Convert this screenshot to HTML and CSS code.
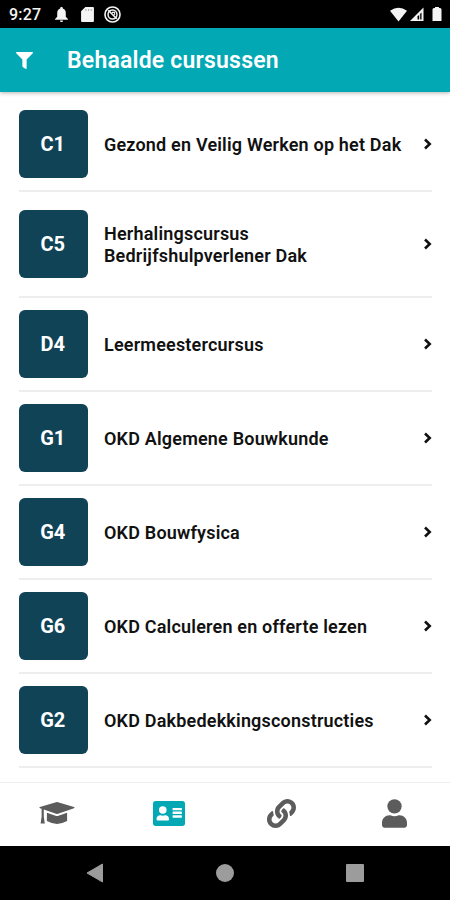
FILE: index.html
```html
<!DOCTYPE html>
<html lang="nl">
<head>
<meta charset="utf-8">
<title>Behaalde cursussen</title>
<link rel="stylesheet" href="styles.css">
</head>
<body>
<svg class="defs" width="0" height="0"><symbol id="chevron" viewBox="0 0 10 12"><path d="M2 1.5 6.7 6 2 10.5" fill="none" stroke="currentColor" stroke-width="2.6"/></symbol></svg>
<div class="app">
  <div class="status">
    <span class="time">9:27</span>
    <svg class="bell" viewBox="0 0 12 14"><path d="M6 0c.8 0 1.2.5 1.2 1.3C9.3 1.9 10 3.6 10 5.5v3.7l2 2v.8H0v-.8l2-2V5.5c0-1.9.8-3.6 2.8-4.2C4.800.5 5.200 0 6 0zM4.600 12.500h2.800C7.400 13.500 6.800 14 6 14s-1.400-.5-1.400-1.500z" fill="currentColor"/></svg>
    <svg class="sd" viewBox="0 0 12 14"><path d="M4 0h7q1 0 1 1v12q0 1-1 1H1q-1 0-1-1V4z" fill="currentColor"/><path d="M4.500 2v1.500M7 2v1.500M9.500 2v1.500" stroke="#999" stroke-width="1"/></svg>
    <svg class="sync" viewBox="0 0 16 16" fill="none" stroke="currentColor"><circle cx="8" cy="8" r="7.100" stroke-width="1.500"/><circle cx="8" cy="8" r="4.200" stroke-width="1.400"/><path d="M4 4l8 8" stroke-width="1.600"/><path d="M7.500 6h2.500v2.500" stroke-width="1"/></svg>
    <svg class="signals" viewBox="0 0 52 16"><path d="M0 3.800Q8.500-2.500 17 3.800L8.500 14.500z" fill="currentColor"/><path d="M33.500.500V14H20z" fill="currentColor"/><path d="M31.500 5.500v7h-4V9.500z" fill="#000"/><path d="M29.700 7v6" stroke="currentColor"/><path d="M44 1h1V0h4v1h1q1.500 0 1.500 1.500V14h-9V2.500Q42.500 1 44 1z" fill="currentColor"/></svg>
  </div>
  <header class="header">
    <svg class="filter" viewBox="0 0 512 512"><path fill="currentColor" d="M487.976 0H24.028C2.710 0-8.047 25.866 7.058 40.971L192 225.941V432c0 7.831 3.821 15.170 10.237 19.662l80 55.980C298.020 518.690 320 507.493 320 487.980V225.941l184.947-184.970C520.021 25.896 509.338 0 487.976 0z"/></svg>
    <h1>Behaalde cursussen</h1>
  </header>
  <main class="list">
    <div class="row"><div class="code">C1</div><div class="name">Gezond en Veilig Werken op het Dak</div><svg class="chev"><use href="#chevron"/></svg></div>
    <div class="row tall"><div class="code">C5</div><div class="name">Herhalingscursus<br>Bedrijfshulpverlener Dak</div><svg class="chev"><use href="#chevron"/></svg></div>
    <div class="row"><div class="code">D4</div><div class="name">Leermeestercursus</div><svg class="chev"><use href="#chevron"/></svg></div>
    <div class="row"><div class="code">G1</div><div class="name">OKD Algemene Bouwkunde</div><svg class="chev"><use href="#chevron"/></svg></div>
    <div class="row"><div class="code">G4</div><div class="name">OKD Bouwfysica</div><svg class="chev"><use href="#chevron"/></svg></div>
    <div class="row"><div class="code">G6</div><div class="name">OKD Calculeren en offerte lezen</div><svg class="chev"><use href="#chevron"/></svg></div>
    <div class="row"><div class="code">G2</div><div class="name">OKD Dakbedekkingsconstructies</div><svg class="chev"><use href="#chevron"/></svg></div>
  </main>
  <nav class="tabs">
    <div class="tab"><svg width="36" height="29" viewBox="0 0 36 29"><path fill="currentColor" d="M17 3.200q1-.3 2 0L35 8q1.200.6 0 1.200L19 14.800q-1 .3-2 0L4.800 10.600v7.200l1 6.800H1.600l1-6.800v-8L.9 9.200Q-.2 8.600.9 8zM7.900 13.800l8.600 3q1.500.5 3 0l8.600-3v8.300q-10 5.600-20.200 0z"/></svg></div>
    <div class="tab active"><svg width="32" height="29" viewBox="0 0 576 512"><rect y="32" width="576" height="448" rx="48" fill="currentColor"/><g fill="#fff"><circle cx="176" cy="192" r="68"/><path d="M288 364.800c0 10.600-10 19.200-22.400 19.200H86.400C74 384 64 375.400 64 364.800v-19.200c0-31.800 30.100-57.600 67.200-57.600h5c12.300 5.100 25.700 8 39.800 8s27.600-2.900 39.800-8h5c37.100 0 67.200 25.800 67.200 57.600z"/><rect x="352" y="155" width="168" height="44" rx="8"/><rect x="352" y="221" width="168" height="44" rx="8"/><rect x="352" y="287" width="168" height="44" rx="8"/></g></svg></div>
    <div class="tab"><svg width="29" height="29" viewBox="0 0 512 512"><path fill="currentColor" d="M326.612 185.391c59.747 59.809 58.927 155.698.36 214.590-.11.12-.24.25-.36.37l-67.200 67.200c-59.270 59.270-155.699 59.262-214.960 0-59.270-59.260-59.270-155.700 0-214.960l37.106-37.106c9.840-9.840 26.786-3.300 27.294 10.606.648 17.722 3.826 35.527 9.690 52.721 1.986 5.822.567 12.262-3.783 16.612l-13.087 13.087c-28.026 28.026-28.905 73.660-1.155 101.960 28.024 28.579 74.086 28.749 102.325.51l67.200-67.190c28.191-28.191 28.073-73.757 0-101.830-3.701-3.694-7.429-6.564-10.341-8.569a16.037 16.037 0 0 1-6.947-12.606c-.396-10.567 3.348-21.456 11.698-29.806l21.054-21.055c5.521-5.521 14.182-6.199 20.584-1.731a152.482 152.482 0 0 1 20.522 17.197zM467.547 44.449c-59.261-59.262-155.690-59.270-214.960 0l-67.200 67.200c-.12.12-.25.25-.36.37-58.566 58.892-59.387 154.781.36 214.590a152.454 152.454 0 0 0 20.521 17.196c6.402 4.468 15.064 3.789 20.584-1.731l21.054-21.055c8.350-8.350 12.094-19.239 11.698-29.806a16.037 16.037 0 0 0-6.947-12.606c-2.912-2.005-6.640-4.875-10.341-8.569-28.073-28.073-28.191-73.639 0-101.830l67.200-67.190c28.239-28.239 74.300-28.069 102.325.51 27.750 28.300 26.872 73.934-1.155 101.960l-13.087 13.087c-4.350 4.350-5.769 10.790-3.783 16.612 5.864 17.194 9.042 34.999 9.690 52.721.509 13.906 17.454 20.446 27.294 10.606l37.106-37.106c59.271-59.259 59.271-155.699.001-214.959z"/></svg></div>
    <div class="tab"><svg width="25" height="29" viewBox="0 0 448 512"><circle cx="224" cy="128" r="128" fill="currentColor"/><path fill="currentColor" d="M313.600 288h-16.700c-22.200 10.200-46.900 16-72.900 16s-50.600-5.800-72.900-16h-16.700C60.200 288 0 348.200 0 422.400V464c0 26.500 21.500 48 48 48h352c26.500 0 48-21.500 48-48v-41.600c0-74.200-60.200-134.400-134.400-134.400z"/></svg></div>
  </nav>
  <div class="system">
    <svg width="18" height="20" viewBox="0 0 18 20"><path d="M16.500 1v18L1 10z" fill="currentColor" stroke="currentColor" stroke-linejoin="round"/></svg>
    <span class="home"></span>
    <span class="recent"></span>
  </div>
</div>
</body>
</html>
```
FILE: styles.css
```css
* { box-sizing: border-box; }
body { margin: 0; background: #fff; font-family: Roboto, "Liberation Sans", sans-serif; }
svg { display: block; flex: none; }
.defs { position: absolute; }
.app { width: 450px; height: 900px; display: flex; flex-direction: column; overflow: hidden; }

.status { height: 28px; flex: none; background: #000; color: #f4f4f4; display: flex; align-items: center; padding: 1px 8px 0 9px; }
.time { width: 46px; font-size: 16px; font-weight: 500; line-height: 28px; letter-spacing: .2px; }
.bell { width: 13px; height: 15px; }
.sd { width: 13px; height: 15px; margin-left: 13px; }
.sync { width: 17px; height: 17px; margin-left: 10px; }
.signals { width: 52px; height: 16px; margin-left: auto; }

.header { height: 64px; flex: none; display: flex; align-items: center; padding-left: 16px; background: #02a9b5; color: #fff; box-shadow: 0 1px 4px rgba(0, 0, 0, .3); z-index: 1; }
.filter { width: 17px; height: 17px; }
.header h1 { margin: 1px 0 0 34px; font-size: 23px; line-height: 28px; font-weight: 600; letter-spacing: .2px; }

.list { flex: 1; padding: 6px 18px 0 19px; }
.row { height: 94px; display: flex; align-items: center; border-bottom: 2px solid #eee; }
.tall { height: 106px; }
.code { width: 68.5px; height: 68.5px; flex: none; display: flex; align-items: center; justify-content: center; padding-right: 1px; border-radius: 6px; background: #114357; color: #fff; font-size: 20px; font-weight: 700; }
.name { flex: 1; margin-left: 16.5px; padding-top: 1px; font-size: 18px; line-height: 22px; font-weight: 600; letter-spacing: .19px; color: #111; white-space: nowrap; }
.chev { width: 10px; height: 12px; margin-right: -1px; color: #111; }

.tabs { height: 64px; flex: none; display: flex; border-top: 1px solid #eee; background: #fff; color: #5c5c5c; }
.tab { flex: 1; display: flex; align-items: center; justify-content: center; padding: 0 0 2px 1px; }
.active { color: #02a9b5; }

.system { height: 54px; flex: none; display: flex; justify-content: space-between; align-items: center; padding: 0 86px; background: #000; color: #9c9c9c; }
.home { width: 18px; height: 18px; border-radius: 50%; background: currentColor; }
.recent { width: 18px; height: 18px; border-radius: 1px; background: currentColor; }
```
